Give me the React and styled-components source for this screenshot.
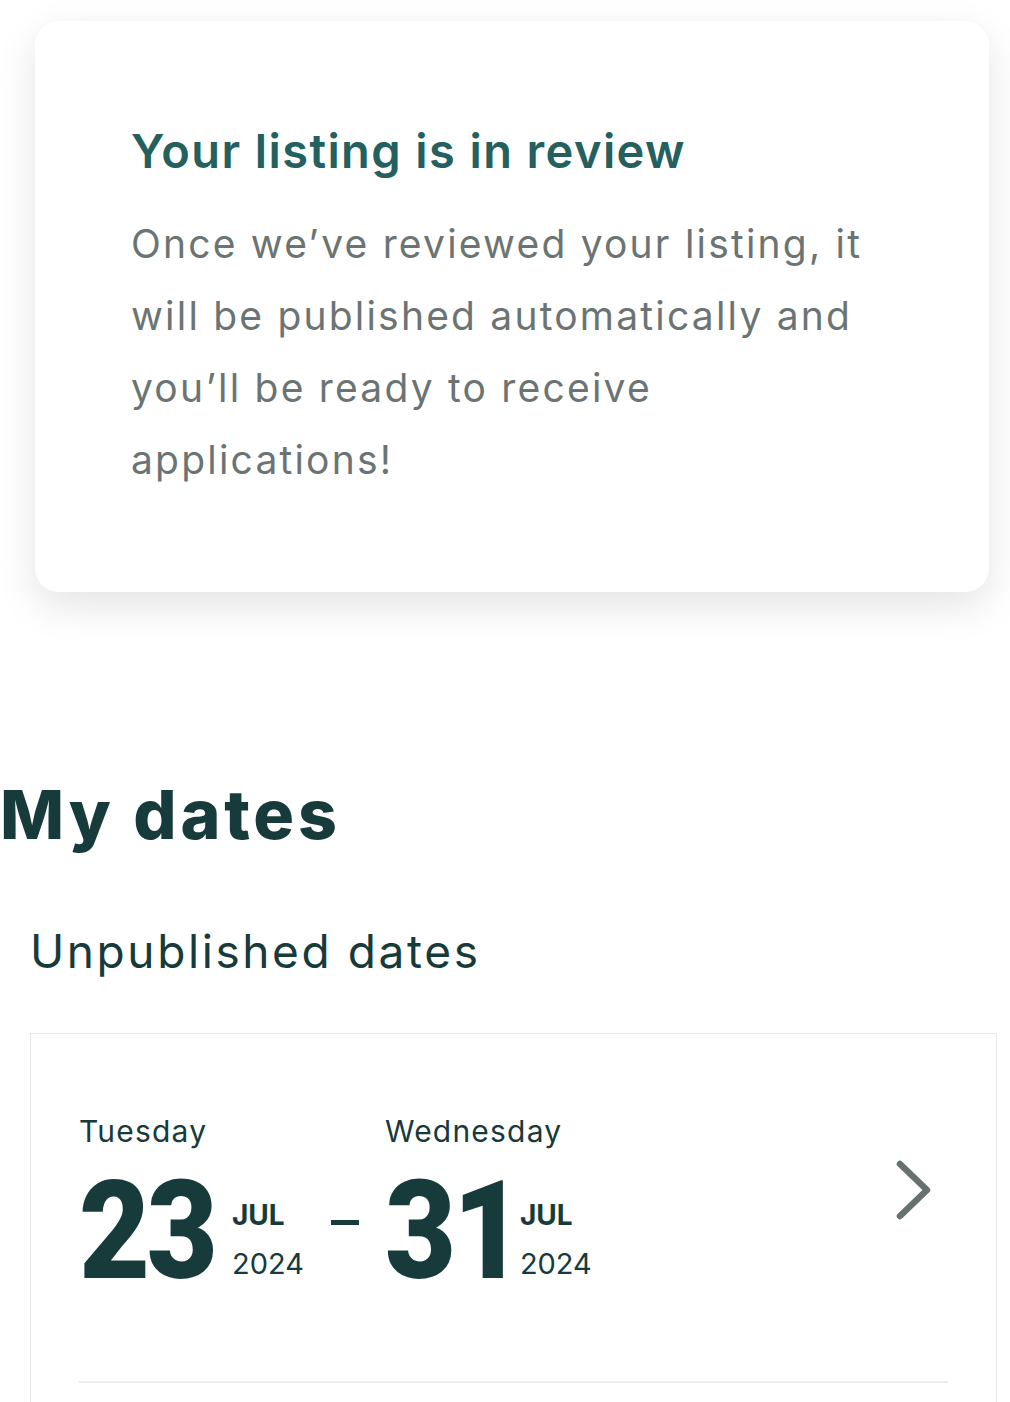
import React from "react";
import styled, { createGlobalStyle } from "styled-components";

const Global = createGlobalStyle`
  html, body { margin: 0; padding: 0; background: #ffffff; }
  body { font-family: "Inter", "Noto Sans", sans-serif; -webkit-font-smoothing: antialiased; }
  * { box-sizing: border-box; }
`;

const Page = styled.div`
  width: 1010px;
  padding-top: 21px;
  overflow: hidden;
`;

const ReviewCard = styled.section`
  margin: 0 21px 0 35px;
  background: #ffffff;
  border-radius: 24px;
  box-shadow: 0 14px 40px rgba(0, 0, 0, 0.11);
  padding: 98px 90px 96px 96px;
`;

const ReviewTitle = styled.h2`
  margin: 0 0 25px;
  font-size: 47px;
  line-height: 64px;
  font-weight: 600;
  color: #24605e;
  letter-spacing: 1.4px;
`;

const ReviewText = styled.p`
  margin: 0;
  font-size: 39px;
  line-height: 72px;
  font-weight: 400;
  color: #6b7473;
  letter-spacing: 2.2px;
`;

const Heading = styled.h1`
  margin: 177px 0 0;
  font-size: 68px;
  line-height: 90px;
  font-weight: 800;
  color: #173a3a;
  letter-spacing: 3.8px;
`;

const SubHeading = styled.h3`
  margin: 62px 0 0 30px;
  font-size: 46px;
  line-height: 60px;
  font-weight: 400;
  color: #173a3a;
  letter-spacing: 2.6px;
`;

const DateCard = styled.div`
  margin: 52px 13px 0 30px;
  border: 1px solid #e7e9e9;
  border-bottom: none;
  padding: 0 48px 60px;
`;

const DateRow = styled.div`
  display: flex;
  align-items: center;
  justify-content: space-between;
  padding: 77px 0 95px;
  border-bottom: 2px solid #ececec;
`;

const Range = styled.div`
  display: flex;
  align-items: flex-end;
`;

const DateBlock = styled.div`
  display: flex;
  flex-direction: column;
`;

const DayName = styled.div`
  font-size: 30px;
  line-height: 40px;
  color: #173a3a;
  letter-spacing: 1.2px;
  margin-bottom: 25px;
`;

const NumberRow = styled.div`
  display: flex;
  align-items: flex-end;
`;

const DayNumber = styled.div`
  font-family: "Roboto", "Inter", sans-serif;
  font-size: 138px;
  line-height: 110px;
  font-weight: 900;
  color: #173a3a;
  letter-spacing: -4px;
  transform: scaleX(0.89);
  transform-origin: left center;
  margin-right: ${(p) => p.$trim}px;
`;

const MonthYear = styled.div`
  display: flex;
  flex-direction: column;
  margin-left: 18px;
  color: #173a3a;
`;

const Month = styled.span`
  font-size: 28px;
  line-height: 28px;
  font-weight: 700;
  margin-bottom: 20px;
`;

const Year = styled.span`
  font-size: 29px;
  line-height: 30px;
  font-weight: 400;
  margin-bottom: 7px;
`;

const Dash = styled.div`
  width: 28px;
  height: 5px;
  background: #173a3a;
  margin: 0 26px 61px 27px;
`;

const Chevron = styled.svg`
  width: 40px;
  height: 64px;
  margin-right: 14px;
  margin-top: -17px;
`;

function DateItem({ day, num, month, year, trim }) {
  return (
    <DateBlock>
      <DayName>{day}</DayName>
      <NumberRow>
        <DayNumber $trim={trim}>{num}</DayNumber>
        <MonthYear>
          <Month>{month}</Month>
          <Year>{year}</Year>
        </MonthYear>
      </NumberRow>
    </DateBlock>
  );
}

export default function App() {
  return (
    <>
      <Global />
      <Page>
        <ReviewCard>
          <ReviewTitle>Your listing is in review</ReviewTitle>
          <ReviewText>
            Once we’ve reviewed your listing, it will be published automatically and you’ll be ready to receive applications!
          </ReviewText>
        </ReviewCard>
        <Heading>My dates</Heading>
        <SubHeading>Unpublished dates</SubHeading>
        <DateCard>
          <DateRow>
            <Range>
              <DateItem day="Tuesday" num="23" month="JUL" year="2024" trim={-17} />
              <Dash />
              <DateItem day="Wednesday" num="31" month="JUL" year="2024" trim={-35} />
            </Range>
            <Chevron viewBox="0 0 40 64" fill="none">
              <path d="M6 6 L33 32 L6 58" stroke="#677170" strokeWidth="6.5" strokeLinecap="round" strokeLinejoin="round" />
            </Chevron>
          </DateRow>
        </DateCard>
      </Page>
    </>
  );
}
